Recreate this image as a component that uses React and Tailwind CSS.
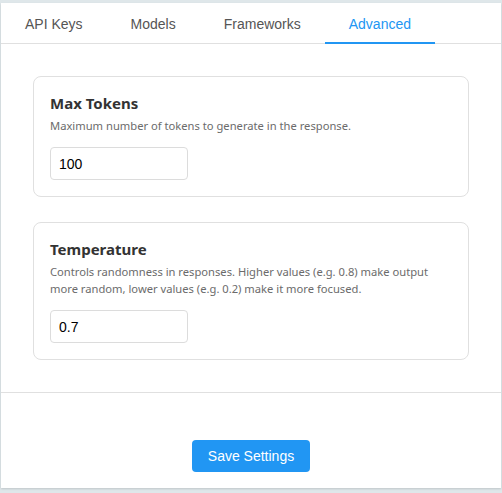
import React from "react";

const tabs = ["API Keys", "Models", "Frameworks", "Advanced"];

function Card({ title, desc, value }) {
  return (
    <div className="rounded-lg border border-[#e0e0e0] bg-white p-4">
      <h3 className="text-[15px] leading-[20px] font-bold text-[#333] font-['Noto_Sans',sans-serif]">{title}</h3>
      <p className="mt-1 text-[11.2px] leading-[17px] text-[#6b6b6b] font-['Noto_Sans',sans-serif]">{desc}</p>
      <input
        readOnly
        value={value}
        className="mt-[13px] block h-[33px] w-[138px] rounded border border-[#dcdcdc] px-2 text-[14px] text-black font-['Liberation_Sans',Arial,sans-serif] outline-none"
      />
    </div>
  );
}

export default function App() {
  return (
    <div className="h-[493px] w-[502px] bg-[#dfe7ea] pt-[3px] px-px">
      <div className="flex h-[485px] flex-col bg-white font-['Liberation_Sans',Arial,sans-serif] shadow-[0_1px_2px_rgba(0,0,0,0.15)]">
        <div className="flex border-b border-[#e0e0e0]">
          {tabs.map((t) => (
            <div
              key={t}
              className={
                t === "Advanced"
                  ? "-mb-px flex h-[41px] items-center border-b-2 border-[#2196f3] px-6 pt-[4px] text-[14px] text-[#2196f3]"
                  : "flex h-[40px] items-center px-6 pt-[2px] text-[14px] text-[#555]"
              }
            >
              {t}
            </div>
          ))}
        </div>
        <div className="flex flex-col gap-[25px] border-b border-[#e0e0e0] px-8 py-8">
          <Card
            title="Max Tokens"
            desc="Maximum number of tokens to generate in the response."
            value="100"
          />
          <Card
            title="Temperature"
            desc="Controls randomness in responses. Higher values (e.g. 0.8) make output more random, lower values (e.g. 0.2) make it more focused."
            value="0.7"
          />
        </div>
        <div className="flex flex-1 items-end justify-center pb-4">
          <button className="h-[32px] w-[118px] rounded bg-[#2196f3] text-[14px] text-white">
            Save Settings
          </button>
        </div>
      </div>
    </div>
  );
}
